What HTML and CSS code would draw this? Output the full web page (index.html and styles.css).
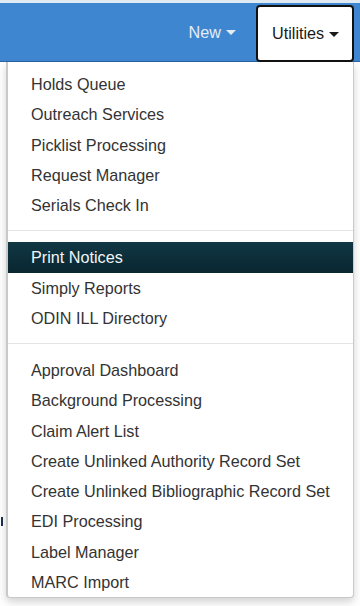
FILE: index.html
```html
<!DOCTYPE html>
<html lang="en">
<head>
<meta charset="utf-8">
<title>Utilities menu</title>
<link rel="stylesheet" href="styles.css">
</head>
<body>
<div class="top-strip"></div>
<nav class="navbar">
  <a class="nav-link">New<span class="caret"></span></a>
  <a class="nav-link nav-open">Utilities<span class="caret"></span></a>
</nav>
<main class="page">
  <span class="page-mark"></span>
</main>
<ul class="dropdown">
  <li class="item">Holds Queue</li>
  <li class="item">Outreach Services</li>
  <li class="item">Picklist Processing</li>
  <li class="item">Request Manager</li>
  <li class="item">Serials Check In</li>
  <li class="divider"></li>
  <li class="item active">Print Notices</li>
  <li class="item">Simply Reports</li>
  <li class="item">ODIN ILL Directory</li>
  <li class="divider"></li>
  <li class="item">Approval Dashboard</li>
  <li class="item">Background Processing</li>
  <li class="item">Claim Alert List</li>
  <li class="item">Create Unlinked Authority Record Set</li>
  <li class="item">Create Unlinked Bibliographic Record Set</li>
  <li class="item">EDI Processing</li>
  <li class="item">Label Manager</li>
  <li class="item">MARC Import</li>
</ul>
</body>
</html>
```
FILE: styles.css
```css
html, body {
  margin: 0;
  padding: 0;
  background: #ffffff;
  font-family: "Liberation Sans", Arial, sans-serif;
  font-size: 16.2px;
  color: #333333;
  height: 606px;
  overflow: hidden;
}

.top-strip {
  height: 3px;
  background: #dfeaf3;
}

.navbar {
  height: 58px;
  background: #3f86d1;
  border-bottom: 1px solid #2c62a0;
  display: flex;
  justify-content: flex-end;
  align-items: stretch;
  padding-right: 6px;
}

.nav-link {
  display: flex;
  align-items: center;
  padding: 0 20px 0 0;
  color: #e4ecf5;
  cursor: pointer;
}

.nav-open {
  margin-top: 2px;
  margin-bottom: -1px;
  width: 98px;
  box-sizing: border-box;
  padding: 0 0 0 14px;
  background: #ffffff;
  color: #1a1a1a;
  border: 2px solid #111111;
  border-radius: 4px;
  position: relative;
  z-index: 3;
}

.caret {
  display: inline-block;
  width: 0;
  height: 0;
  margin-left: 5px;
  margin-top: 1px;
  border-top: 5px solid currentColor;
  border-left: 5px solid transparent;
  border-right: 5px solid transparent;
}

.page {
  position: relative;
  height: 544px;
}

.page-mark {
  position: absolute;
  left: 1px;
  top: 455px;
  width: 2px;
  height: 9px;
  background: #1d3050;
}

.dropdown {
  position: absolute;
  top: 62px;
  left: 6px;
  width: 348px;
  height: 536px;
  box-sizing: border-box;
  margin: 0;
  padding: 7px 0 0;
  list-style: none;
  background: #ffffff;
  border: 1px solid #c9c9c9;
  border-left-width: 2px;
  border-top: 0;
  border-radius: 0 0 4px 4px;
  box-shadow: 0 4px 8px rgba(0, 0, 0, 0.18);
  overflow: hidden;
  z-index: 2;
}

.item {
  padding: 5px 0 5px 23px;
  line-height: 20.25px;
  white-space: nowrap;
  color: #333333;
}

.item.active {
  color: #f2f5f7;
  background: linear-gradient(to bottom, #113844 0%, #082630 100%);
}

.divider {
  height: 1px;
  margin: 10px 0 11px;
  background: #e5e5e5;
}
```
